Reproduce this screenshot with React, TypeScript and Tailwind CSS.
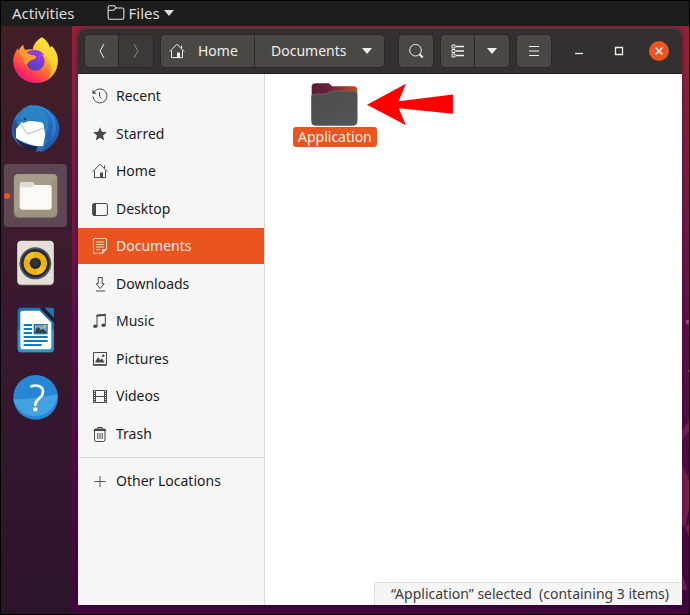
import React from "react";

type IconProps = { className?: string; children: React.ReactNode };

const Icon: React.FC<IconProps> = ({ className = "size-4", children }) => (
    <svg viewBox="0 0 16 16" className={`shrink-0 ${className}`} fill="none" stroke="currentColor" strokeWidth="1" aria-hidden="true">
        {children}
    </svg>
);

const HomeShape = () => (
    <>
        <path d="M.7 8.6 8 1.2l7.3 7.4M2.5 7.5v7.1h11V7.5M12.6 5.2V2.5" />
        <path d="M8 9.5h3v5H8z" fill="currentColor" stroke="none" />
    </>
);

const places = [
    {
        name: "Recent",
        icon: (
            <>
                <path d="M2.3 3.8A7 7 0 1 1 1 8.5M7.5 4v4.5l2 1.8" />
                <path d="M.5 1.8v4h4z" fill="currentColor" stroke="none" />
            </>
        ),
    },
    {
        name: "Starred",
        icon: <path d="m8 1.3 1.9 4.5 5 .4-3.9 3.200 1.300 5L8 11.700l-4.300 2.700 1.300-5-3.900-3.200 5-.4z" fill="currentColor" stroke="none" />,
    },
    { name: "Home", icon: <HomeShape /> },
    {
        name: "Desktop",
        icon: (
            <>
                <rect x=".6" y="2.5" width="14.8" height="12" rx="1.5" />
                <path d="M1 2.5h3v12H1z" fill="currentColor" stroke="none" />
            </>
        ),
    },
    {
        name: "Documents",
        active: true,
        icon: (
            <>
                <path d="M1.5.5h13v10.8l-4 4h-9zM4 4h8M4 6.5h8M4 9h8M4 11.5h4" />
                <path d="M10 11h4.5L10 15.5z" fill="currentColor" stroke="none" />
            </>
        ),
    },
    {
        name: "Downloads",
        icon: <path d="M6.2 1.5h4v6.2h2L8.2 12.5l-4-4.8h2zM4 15h9" />,
    },
    {
        name: "Music",
        icon: (
            <>
                <path d="M5 13V2.3l8.3-1v10.2" />
                <path d="M4.5 1.8 13.8.8v2l-9.3 1z" fill="currentColor" stroke="none" />
                <ellipse cx="3.3" cy="13.2" rx="2.2" ry="1.8" fill="currentColor" stroke="none" />
                <ellipse cx="11.6" cy="12.2" rx="2.2" ry="1.8" fill="currentColor" stroke="none" />
            </>
        ),
    },
    {
        name: "Pictures",
        icon: (
            <>
                <path d="M1.5 1.5h13v12.8h-13zM1.5 13.6h13" />
                <path d="M3 11.5 6 6l2.2 3L10 7.5l2.7 4z" fill="currentColor" stroke="none" />
                <circle cx="11.2" cy="4.8" r="1.3" fill="currentColor" stroke="none" />
            </>
        ),
    },
    {
        name: "Videos",
        icon: (
            <>
                <path d="M3.5 2.5h9v12h-9zM3.5 8.5h9M1.5 2v13M14.5 2v13" />
                <path d="M2.5 2v13M13.5 2v13" strokeDasharray="1 1" />
            </>
        ),
    },
    {
        name: "Trash",
        icon: (
            <>
                <path d="M2.5 5v9q0 1.5 1.5 1.5h7.5q1.5 0 1.5-1.5V5M5.8 7v6M8 7v6M10.2 7v6M5.5 2.5v-1h4.7v1" />
                <path d="M1.5 4.9q0-2.5 2.2-2.5h8.4q2.2 0 2.2 2.5z" fill="currentColor" stroke="none" />
            </>
        ),
    },
];

const Firefox = () => (
    <svg viewBox="12 15 189 189" className="size-full" aria-hidden="true">
        <defs>
            <linearGradient id="ffBody" x1=".8" y1=".1" x2=".25" y2=".95">
                <stop offset="0" stopColor="#fff04a" />
                <stop offset=".35" stopColor="#ffb62b" />
                <stop offset=".6" stopColor="#ff6a30" />
                <stop offset=".85" stopColor="#fb2f5b" />
                <stop offset="1" stopColor="#e9157f" />
            </linearGradient>
            <linearGradient id="ffGlobe" x1=".7" y1="0" x2=".3" y2="1">
                <stop offset="0" stopColor="#a83be2" />
                <stop offset="1" stopColor="#503fc0" />
            </linearGradient>
        </defs>
        <path
            d="M126 37c12 8 20 17 24 31l5-5c14 14 21 32 18 54-4 36-32 57-65 57-37 0-66-26-68-62-1-18 6-32 14-42l2 7c4-9 8-14 14-18 0 8 3 13 7 16 7-3 14-3 21-1 2-16 13-29 28-37z"
            fill="url(#ffBody)"
        />
        <path d="M126 38c12 8 20 17 24 31l5-5c14 14 20 33 17 53-3 20-13 35-28 45 12-18 13-39 2-57-7-12-27-22-38-32 0-15 7-27 18-35z" fill="#ffdc38" opacity=".7" />
        <circle cx="106" cy="109" r="28" fill="url(#ffGlobe)" />
        <path d="M78 84c7-7 17-10 27-9 14 1 24 7 29 17-7-4-13-4-17-2 8 7 7 17 1 24l-9-17-20-7z" fill="#8f3ce0" />
        <path d="M57 75c8-2 15 0 20 4 5 6 10 10 18 11 7 1 14 2 14 6-1 5-8 7-16 10-8 4-14 11-14 19-7-9-10-18-7-27-7-4-15-14-15-23z" fill="#ff9c2e" />
    </svg>
);

const Thunderbird = () => (
    <svg viewBox="12 216 189 189" className="size-full" aria-hidden="true">
        <defs>
            <linearGradient id="tbBody" x1="0" y1="0" x2="1" y2="1">
                <stop offset="0" stopColor="#2b86b8" />
                <stop offset=".5" stopColor="#2476cf" />
                <stop offset="1" stopColor="#1d4d9e" />
            </linearGradient>
        </defs>
        <path d="M62 258c8-10 20-17 36-19l-4 5c12-4 24-2 36 3 29 12 49 38 48 66-1 27-20 53-50 67l5-9c-9 6-18 9-29 10l8-7c-23 2-46-5-59-19-14-13-20-33-16-51 3-22 13-37 25-46z" fill="url(#tbBody)" />
        <path d="M48 282c5 18 8 36 3 60-13-14-17-32-12-46 2-6 5-11 9-14z" fill="#2b4f94" />
        <path d="m63 254 17 18-6 26 56-8 8 38-10 52q-50-5-80-39z" fill="#2370b8" />
        <path d="m48 312 22-26 60 6 6 38-7 33-17 1q-36-7-64-24z" fill="#fff" />
        <path d="m58 292 25 35 48-18" fill="none" stroke="#b8b8b8" strokeWidth="3" />
        <path d="M64 263c14-20 46-26 66-8 15 14 22 43 6 78l-3-31c-3-8-10-14-24-15-15-2-27 0-38 8-11-8-12-22-7-32z" fill="#2c83c4" />
        <path d="M84 245c28-8 56 4 72 32M130 250c31 19 38 53 24 80M158 274c12 24 10 49-6 69M140 342l-11 26" fill="none" stroke="#4aa0dd" strokeWidth="3" opacity=".6" />
        <circle cx="75" cy="282" r="4" fill="#123d70" />
        <path d="M46 338c16 14 40 25 68 26l-7 16c-25-3-50-17-61-42z" fill="#24203f" />
    </svg>
);

const FilesApp = () => (
    <svg viewBox="12 27 189 189" className="size-full" aria-hidden="true">
        <rect x="41" y="57" width="132" height="132" rx="14" fill="#777062" />
        <rect x="43" y="58" width="128" height="128" rx="13" fill="#9c947f" />
        <path d="M43 70q0-12 12-12h104q12 0 12 12L43 170z" fill="#a59d8a" />
        <path d="M59 98V88q0-7 7-7h30q4 0 6 4l4 7h20v12z" fill="#dedbd0" />
        <path d="M59 101q0-4 5-4h31l11-7h42q7 0 7 7v59q0 8-7 8H67q-8 0-8-8z" fill="#faf9f6" />
    </svg>
);

const Rhythmbox = () => (
    <svg viewBox="12 228 189 189" className="size-full" aria-hidden="true">
        <rect x="52" y="259" width="109" height="132" rx="12" fill="#aba598" />
        <rect x="52" y="257" width="109" height="131" rx="12" fill="#e4e0d7" />
        <circle cx="106" cy="325" r="48" fill="#58595c" />
        <circle cx="106" cy="325" r="43" fill="#252a38" />
        <circle cx="106" cy="325" r="35" fill="#eab313" />
        <path d="M106 325 74 310q8-18 25-20zM106 325l32 14q-8 18-25 20z" fill="#ffc52d" opacity=".7" />
        <circle cx="106" cy="325" r="17" fill="#25272e" />
        <circle cx="106" cy="325" r="10" fill="#34363b" />
    </svg>
);

const Writer = () => (
    <svg viewBox="12 9 189 189" className="size-full" aria-hidden="true">
        <path d="M64 38h64l34 34v88q0 12-11 12H64q-11 0-11-12V50q0-12 11-12z" fill="#1878b5" />
        <path d="M53 105h109v55q0 12-11 12H64q-11 0-11-12z" fill="#2d93ce" />
        <path d="M68 47h51l35 36v73q0 7-7 7H68q-7 0-7-7V54q0-7 7-7z" fill="#fff" />
        <path d="m119 39 43 44V69l-30-31z" fill="#28172a" />
        <path d="M133 38h22q7 0 7 7v23z" fill="#1878b5" />
        <path d="M71 90h25M71 102h25M71 114h25M71 126h72M71 138h72M71 150h54" stroke="#1b77b1" strokeWidth="6" />
        <path d="M101 87h42v31h-42z" fill="#1878b5" />
        <path d="M105 91h34v23h-34z" fill="#88aabd" />
        <path d="m105 114 3-13 7-5 8 9 7-4 9 9v4z" fill="#3d3b3b" />
        <circle cx="134" cy="94" r="5" fill="#f3bc27" />
    </svg>
);

const Help = () => (
    <svg viewBox="12 210 189 189" className="size-full" aria-hidden="true">
        <circle cx="107" cy="307" r="67" fill="#2787d5" />
        <path d="M40 313q67 0 132-16a67 67 0 0 1-132 16z" fill="#43a3e2" />
        <path d="M91 275c20-8 39-1 38 16-1 20-23 21-23 38v3" fill="none" stroke="#fff" strokeWidth="8" />
        <circle cx="106" cy="343" r="6.5" fill="#fff" />
    </svg>
);

const apps = [
    { name: "Firefox", Logo: Firefox },
    { name: "Thunderbird Mail", Logo: Thunderbird },
    { name: "Files", Logo: FilesApp, running: true },
    { name: "Rhythmbox", Logo: Rhythmbox },
    { name: "LibreOffice Writer", Logo: Writer },
    { name: "Help", Logo: Help },
];

const Caret = () => (
    <svg viewBox="0 0 10 6" className="w-[10px] h-[6px] shrink-0" aria-hidden="true">
        <path d="M0 0h10L5 6z" fill="currentColor" />
    </svg>
);

const TopBar: React.FC = () => (
    <header className="flex items-center h-[25px] shrink-0 bg-[#1d1d1d] text-[#dedede] text-[15px] pl-[11px] pb-[2px]">
        <button className="leading-5">Activities</button>
        <button className="flex items-center gap-1 ml-8 leading-5">
            <Icon className="size-[18px]">
                <path d="M1 4V3q0-1.500 1.500-1.500h4l1.700 2h5.300Q15 3.500 15 5v7q0 1.500-1.500 1.500h-11Q1 13.500 1 12zM1 5.500h5l2-2" />
            </Icon>
            Files
            <Caret />
        </button>
    </header>
);

const Dock: React.FC = () => (
    <aside className="w-[71px] shrink-0 pt-1 pl-[3px] bg-linear-to-b from-[#431e27] via-[#391930] to-[#2b142a]">
        <nav className="flex flex-col gap-1">
            {apps.map(({ name, Logo, running }) => (
                <button
                    key={name}
                    aria-label={name}
                    className={running ? "relative size-[63px] rounded-[4px] bg-[#5e4654]" : "relative size-[63px]"}
                >
                    <Logo />
                    {running && <span className="absolute left-0 top-[29px] size-[6px] rounded-full bg-[#e95420]" />}
                </button>
            ))}
        </nav>
    </aside>
);

const HeaderBar: React.FC = () => (
    <div className="flex items-center h-[46px] shrink-0 pl-[7px] pr-[13px] rounded-t-[8px] bg-[#323030] border-t border-[#454343] border-b border-b-[#1f1d1d] text-[#eeeeec]">
        <div className="flex h-8 rounded-[4px] overflow-hidden bg-[#4a4845] ring-1 ring-[#2a2827]">
            <button aria-label="Back" className="w-[34px] flex items-center justify-center border-r border-[#2a2827]">
                <Icon><path d="M10 1 6 8l4 7" /></Icon>
            </button>
            <button aria-label="Forward" className="w-[34px] flex items-center justify-center bg-[#3c3a39] text-[#8a8886]">
                <Icon><path d="m6 1 4 7-4 7" /></Icon>
            </button>
        </div>
        <div className="flex h-8 ml-2 rounded-[4px] overflow-hidden bg-[#4a4845] ring-1 ring-[#2a2827]">
            <button className="flex items-center gap-[13px] pl-2 w-[94px] border-r border-[#2a2827]">
                <Icon><HomeShape /></Icon>
                Home
            </button>
            <button className="flex items-center justify-between w-[129px] pl-4 pr-3">
                Documents
                <Caret />
            </button>
        </div>
        <div className="flex items-center gap-2 ml-auto">
            <button aria-label="Search" className="flex items-center justify-center w-[34px] h-8 rounded-[4px] bg-[#4a4845] ring-1 ring-[#2a2827]">
                <Icon>
                    <circle cx="7.5" cy="7.2" r="5.8" />
                    <path d="m11.5 11.3 3.2 3.2" strokeWidth="2" />
                </Icon>
            </button>
            <div className="flex h-8 rounded-[4px] overflow-hidden bg-[#4a4845] ring-1 ring-[#2a2827]">
                <button aria-label="List view" className="w-[34px] flex items-center justify-center border-r border-[#2a2827]">
                    <Icon>
                        <path d="M2 2h3v3H2zM2 6.5h3v3H2zM2 11h3v3H2z" />
                        <path d="M6 3.5h8M6 8h8M6 12.5h8" strokeWidth="1.3" />
                    </Icon>
                </button>
                <button aria-label="View options" className="w-[34px] flex items-center justify-center">
                    <Caret />
                </button>
            </div>
            <button aria-label="Menu" className="flex items-center justify-center w-[34px] h-8 rounded-[4px] bg-[#4a4845] ring-1 ring-[#2a2827]">
                <Icon><path d="M3 3.5h10M3 8h10M3 12.5h10" strokeWidth="1.2" /></Icon>
            </button>
        </div>
        <div className="flex items-center gap-5 ml-[18px]">
            <button aria-label="Minimize" className="size-5 flex items-center justify-center">
                <Icon><path d="M4 10.5h8" strokeWidth="1.3" /></Icon>
            </button>
            <button aria-label="Maximize" className="size-5 flex items-center justify-center">
                <Icon><path d="M4.5 4.5h7v7h-7z" strokeWidth="1.3" /></Icon>
            </button>
            <button aria-label="Close" className="size-5 flex items-center justify-center rounded-full bg-[#e95420]">
                <Icon><path d="m4.5 4.5 7 7m0-7-7 7" strokeWidth="1.5" /></Icon>
            </button>
        </div>
    </div>
);

const Sidebar: React.FC = () => (
    <nav className="w-[187px] shrink-0 pt-1 bg-[#f6f6f6] border-r border-[#d6d6d6] text-[#1c1c1c]">
        <ul className="flex flex-col justify-between h-[374px]">
            {places.map((place) => (
                <li key={place.name}>
                    <a
                        href="#"
                        className={
                            place.active
                                ? "flex items-center gap-2 h-9 pl-[14px] bg-[#e95420] text-[#ffe9e0]"
                                : "flex items-center gap-2 h-9 pl-[14px]"
                        }
                    >
                        <span className={place.active ? "text-[#fbd5c6]" : "text-[#484848]"}>
                            <Icon>{place.icon}</Icon>
                        </span>
                        {place.name}
                    </a>
                </li>
            ))}
        </ul>
        <hr className="mt-[5px] mb-[5px] border-[#dadada]" />
        <a href="#" className="flex items-center gap-2 h-9 pl-[14px]">
            <span className="text-[#555555]">
                <Icon><path d="M2.5 8.5h11M8 3v11" /></Icon>
            </span>
            Other Locations
        </a>
    </nav>
);

const Content: React.FC = () => (
    <main className="flex-1 flex flex-col bg-white">
        <div className="flex items-start pl-7 pt-[9px]">
            <button className="flex flex-col items-center">
                <svg viewBox="96 38 140 128" className="w-[47px] h-[43px]" aria-hidden="true">
                    <defs>
                        <linearGradient id="folderBack">
                            <stop offset="0" stopColor="#5c1b3b" />
                            <stop offset=".4" stopColor="#6a2337" />
                            <stop offset=".75" stopColor="#99402a" />
                            <stop offset="1" stopColor="#cd4b20" />
                        </linearGradient>
                        <linearGradient id="folderFront" x1="0" y1="0" x2="1" y2="1">
                            <stop offset="0" stopColor="#4c4c4c" />
                            <stop offset="1" stopColor="#555555" />
                        </linearGradient>
                    </defs>
                    <path d="M98 50q0-11 11-11h37q5 0 8 4l5 5h64q11 0 11 11v90H98z" fill="url(#folderBack)" />
                    <path d="M97 80q0-9 8-9h31q7 0 12-5 5-4 12-4h62q12 0 12 12v79q0 12-12 12H109q-12 0-12-12z" fill="url(#folderFront)" />
                    <path d="M98 79q0-8 8-8h31q7 0 12-5 5-4 12-4h61q11 0 11 9" fill="none" stroke="#77706d" strokeWidth="2" />
                </svg>
                <span className="mt-px px-[5px] leading-5 rounded-[3px] bg-[#e95420] text-[#ffede6]">Application</span>
            </button>
            {/* arrow pointing at the folder */}
            <svg viewBox="258 40 264 128" className="w-[88px] h-[43px] -ml-[11px]" aria-hidden="true">
                <path d="m261 105 117-63-22 52 163-20v58l-163-17 22 51z" fill="#fe0000" />
            </svg>
        </div>
        <p className="self-end mt-auto pl-4 pr-[13px] leading-[22px] rounded-tl-[4px] bg-[#f5f5f5] border-t border-l border-[#dddddd] text-[#3d3d3d] whitespace-pre">
            “Application” selected  (containing 3 items)
        </p>
    </main>
);

export default function App() {
    return (
        <div className="min-h-screen flex flex-col border border-black bg-black font-['Noto_Sans',sans-serif] text-[14px] leading-5">
            <TopBar />
            <div className="relative flex-1 flex bg-linear-to-b from-[#96203a] via-[#600e4c] to-[#42063f]">
                <svg viewBox="0 0 7 588" className="absolute right-0 top-0 w-[7px] h-[588px]" aria-hidden="true">
                    <path d="M7 395 0 404v11l7-10zM0 438l7 16v28l-4 20-3-3zM3 502l4 7v-12zM0 546l5 18H0z" fill="#781b56" />
                    <path d="M4 294h3v4H4zM6 344h1v2H6z" fill="#93477d" />
                </svg>
                <Dock />
                <div className="relative flex-1 flex flex-col mt-[2px] ml-[6px] mr-[7px] mb-[9px] rounded-t-[8px] shadow-[0_1px_4px_rgba(0,0,0,0.4)]">
                    <HeaderBar />
                    <div className="flex-1 flex">
                        <Sidebar />
                        <Content />
                    </div>
                </div>
            </div>
        </div>
    );
}
